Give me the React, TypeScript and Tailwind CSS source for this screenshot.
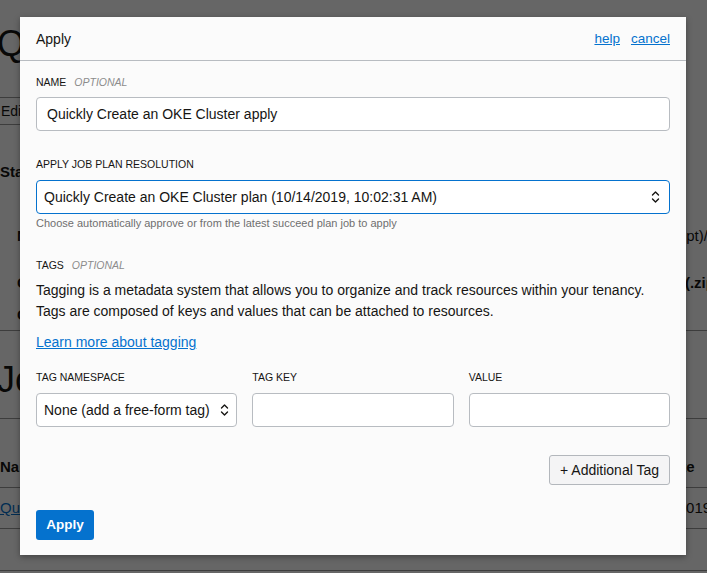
import React from 'react';

const font = { fontFamily: '"Liberation Sans", Arial, sans-serif' };

const UpDown = () => (
    <svg width="9" height="14" viewBox="0 0 9 14" fill="none" stroke="#161513" strokeWidth="1.4" strokeLinecap="round" strokeLinejoin="round">
        <path d="M1.5 5 L4.5 2 L7.5 5" />
        <path d="M1.5 9 L4.5 12 L7.5 9" />
    </svg>
);

const Label = ({ text, optional }: { text: string; optional?: boolean }) => (
    <div className="flex items-center gap-[8px] text-[10.5px] leading-[13px] text-[#161513] uppercase">
        <span>{text}</span>
        {optional && <span className="italic text-[#8c8c8c]">optional</span>}
    </div>
);

const Background = () => (
    <div className="absolute inset-0 bg-white text-[#161513] overflow-hidden whitespace-nowrap">
        <div className="ml-[-3px] pt-[22px] text-[36px] leading-[44px]">Quickly Create an OKE Cluster</div>
        <div className="mt-[31px] flex">
            <div className="ml-[-12px] h-[28px] px-3 border border-[#9a9a9a] flex items-center text-[14px]">Edit</div>
        </div>
        <div className="mt-[38px] text-[15px] leading-[18px] font-bold">Stack Information</div>
        <div className="text-[15px] leading-[18px]">
            <div className="mt-[46px] flex">
                <span className="w-[622px] shrink-0 pl-[17px] font-bold">Name</span>
                <span>(Root script)/stack.zip</span>
            </div>
            <div className="mt-[29px] flex font-bold">
                <span className="w-[611px] shrink-0 pl-[17px]">Configuration</span>
                <span>Terraform (.zip)</span>
            </div>
            <div className="mt-[14px] pl-[17px] font-bold">Created</div>
        </div>
        <div className="mt-[6px] border-b border-[#9a9a9a]" />
        <div className="mt-[27px] text-[36px] leading-[44px] ml-[-3px]">Jobs</div>
        <div className="mt-[16px] border-b border-[#9a9a9a]" />
        <div className="mt-[39px] flex text-[15px] leading-[18px] font-bold">
            <span className="w-[662px] shrink-0">Name</span>
            <span>Date</span>
        </div>
        <div className="mt-[11px] border-b border-[#9a9a9a]" />
        <div className="mt-[11px] flex text-[15px] leading-[18px]">
            <span className="w-[636px] shrink-0"><span className="underline text-[#0572ce]">Quickly</span></span>
            <span>10/14/2019, 10:02:31 AM</span>
        </div>
        <div className="mt-[11px] border-b border-[#9a9a9a]" />
        <div className="mt-[41px] border-b border-[#9a9a9a]" />
    </div>
);

export default function App() {
    return (
        <div className="relative w-[707px] h-[573px] overflow-hidden" style={font}>
            <Background />
            <div className="absolute inset-0 bg-black/60" />

            {/* Modal */}
            <div className="absolute left-[20px] top-[17px] w-[666px] h-[538px] bg-[#fbfbfb] shadow-[0_2px_6px_rgba(0,0,0,0.35)] flex flex-col">
                <div className="h-[44px] border-b border-[#b8bcc1] px-4 flex items-center justify-between">
                    <span className="text-[14px] text-[#161513] pt-[2px]">Apply</span>
                    <div className="flex gap-[11px] text-[13.5px] text-[#0572ce] pt-[2px]">
                        <span className="underline">help</span>
                        <span className="underline">cancel</span>
                    </div>
                </div>

                <div className="px-4 pt-[15px] flex flex-col">
                    <Label text="Name" optional />
                    <div className="mt-2 h-[34px] bg-white border border-[#b8bcc1] rounded-[4px] px-[10px] flex items-center text-[14px] text-[#161513]">
                        Quickly Create an OKE Cluster apply
                    </div>

                    <div className="mt-[27px]">
                        <Label text="Apply job plan resolution" />
                    </div>
                    <div className="mt-[9px] h-[34px] bg-white border border-[#0572ce] rounded-[4px] pl-[7px] pr-[9px] flex items-center justify-between text-[14px] text-[#161513]">
                        <span>Quickly Create an OKE Cluster plan (10/14/2019, 10:02:31 AM)</span>
                        <UpDown />
                    </div>
                    <div className="mt-[2px] text-[11px] leading-[14px] text-[#6f6f6f]">
                        Choose automatically approve or from the latest succeed plan job to apply
                    </div>

                    <div className="mt-[29px]">
                        <Label text="Tags" optional />
                    </div>
                    <p className="mt-2 text-[14px] leading-[21px] text-[#161513]">
                        Tagging is a metadata system that allows you to organize and track resources within your tenancy.
                        <br />
                        Tags are composed of keys and values that can be attached to resources.
                    </p>
                    <div className="mt-[10px] text-[14px] leading-[21px]">
                        <span className="underline text-[#0572ce]">Learn more about tagging</span>
                    </div>

                    <div className="mt-[18px] grid grid-cols-3 gap-[15px]">
                        <div>
                            <Label text="Tag namespace" />
                            <div className="mt-[9px] h-[34px] bg-white border border-[#b8bcc1] rounded-[4px] pl-[7px] pr-[7px] flex items-center justify-between text-[14px] text-[#161513] whitespace-nowrap">
                                <span>None (add a free-form tag)</span>
                                <UpDown />
                            </div>
                        </div>
                        <div>
                            <Label text="Tag key" />
                            <div className="mt-[9px] h-[34px] bg-white border border-[#b8bcc1] rounded-[4px]" />
                        </div>
                        <div>
                            <Label text="Value" />
                            <div className="mt-[9px] h-[34px] bg-white border border-[#b8bcc1] rounded-[4px]" />
                        </div>
                    </div>

                    <div className="mt-[28px] flex justify-end">
                        <button className="h-[30px] px-[10px] bg-[#f4f4f5] border border-[#b3b7bc] rounded-[3px] text-[14px] text-[#161513]">
                            + Additional Tag
                        </button>
                    </div>

                    <div className="mt-[25px] flex">
                        <button className="h-[30px] w-[58px] bg-[#0572ce] rounded-[3px] text-[13.5px] font-bold text-white">
                            Apply
                        </button>
                    </div>
                </div>
            </div>
        </div>
    );
}
